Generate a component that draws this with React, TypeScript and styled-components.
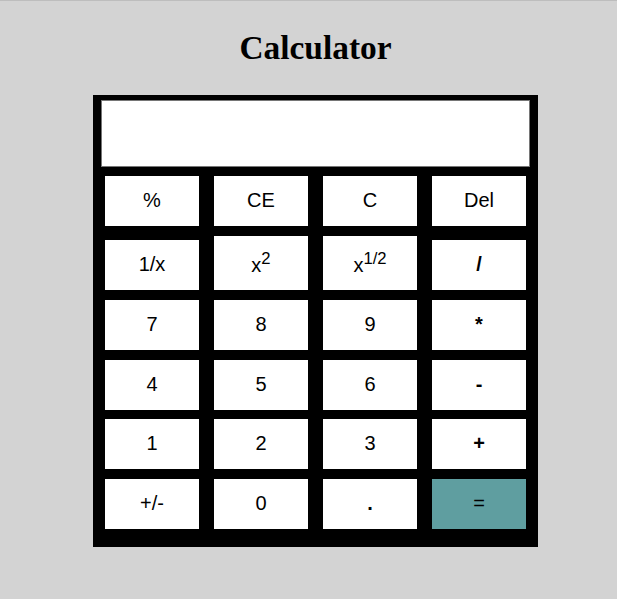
import React from "react";
import styled, { createGlobalStyle } from "styled-components";

const GlobalStyle = createGlobalStyle`
  html, body {
    margin: 0;
    padding: 0;
    background: #d3d3d3;
  }
  body {
    font-family: "Liberation Sans", Arial, sans-serif;
  }
`;

const Page = styled.main`
  min-height: 100vh;
  box-sizing: border-box;
  border-top: 1px solid #bdbdbd;
  padding: 28px 0 0 14px;
  display: flex;
  flex-direction: column;
  align-items: center;
`;

const Title = styled.h1`
  margin: 0 0 28px;
  font-family: "Liberation Serif", "Times New Roman", serif;
  font-weight: bold;
  font-size: 33.4px;
  line-height: 38px;
  color: #000;
`;

const Calculator = styled.div`
  width: 445px;
  box-sizing: border-box;
  background: #000;
  padding: 5px 8px 18px;
`;

const Display = styled.input`
  display: block;
  width: 100%;
  height: 67px;
  box-sizing: border-box;
  margin: 0;
  border: 1px solid #767676;
  background: #fff;
  font-family: "Liberation Sans", Arial, sans-serif;
  font-size: 24px;
  text-align: right;
  padding: 0 10px;
  outline: none;
`;

const Keypad = styled.div`
  display: flex;
  flex-direction: column;
  gap: 9.7px;
  padding: 9px 4px 0;
`;

const Row = styled.div`
  display: flex;
  align-items: flex-end;
  gap: 15px;
`;

type Variant = "plain" | "op" | "equals";

const Key = styled.button<{ $variant: Variant }>`
  width: 94px;
  margin: 0;
  border: none;
  border-radius: 0;
  padding: 13px 0 14px;
  font-family: "Liberation Sans", Arial, sans-serif;
  font-size: 20px;
  line-height: normal;
  font-weight: ${(p) => (p.$variant === "op" ? "bold" : "normal")};
  color: #000;
  background: ${(p) => (p.$variant === "equals" ? "#5f9ea0" : "#fff")};
  cursor: pointer;

  sup {
    font-size: smaller;
    vertical-align: super;
    line-height: normal;
  }
`;

type KeyDef = { label: React.ReactNode; id: string; variant?: Variant };

const rows: KeyDef[][] = [
  [
    { id: "pct", label: "%" },
    { id: "ce", label: "CE" },
    { id: "c", label: "C" },
    { id: "del", label: "Del" },
  ],
  [
    { id: "inv", label: "1/x" },
    {
      id: "sq",
      label: (
        <>
          x<sup>2</sup>
        </>
      ),
    },
    {
      id: "sqrt",
      label: (
        <>
          x<sup>1/2</sup>
        </>
      ),
    },
    { id: "div", label: "/", variant: "op" },
  ],
  [
    { id: "7", label: "7" },
    { id: "8", label: "8" },
    { id: "9", label: "9" },
    { id: "mul", label: "*", variant: "op" },
  ],
  [
    { id: "4", label: "4" },
    { id: "5", label: "5" },
    { id: "6", label: "6" },
    { id: "sub", label: "-", variant: "op" },
  ],
  [
    { id: "1", label: "1" },
    { id: "2", label: "2" },
    { id: "3", label: "3" },
    { id: "add", label: "+", variant: "op" },
  ],
  [
    { id: "neg", label: "+/-" },
    { id: "0", label: "0" },
    { id: "dot", label: ".", variant: "op" },
    { id: "eq", label: "=", variant: "equals" },
  ],
];

export default function App() {
  return (
    <>
      <GlobalStyle />
      <Page>
        <Title>Calculator</Title>
        <Calculator>
          <Display type="text" readOnly value="" aria-label="display" />
          <Keypad>
            {rows.map((row, i) => (
              <Row key={i}>
                {row.map((k) => (
                  <Key key={k.id} type="button" $variant={k.variant ?? "plain"}>
                    {k.label}
                  </Key>
                ))}
              </Row>
            ))}
          </Keypad>
        </Calculator>
      </Page>
    </>
  );
}
